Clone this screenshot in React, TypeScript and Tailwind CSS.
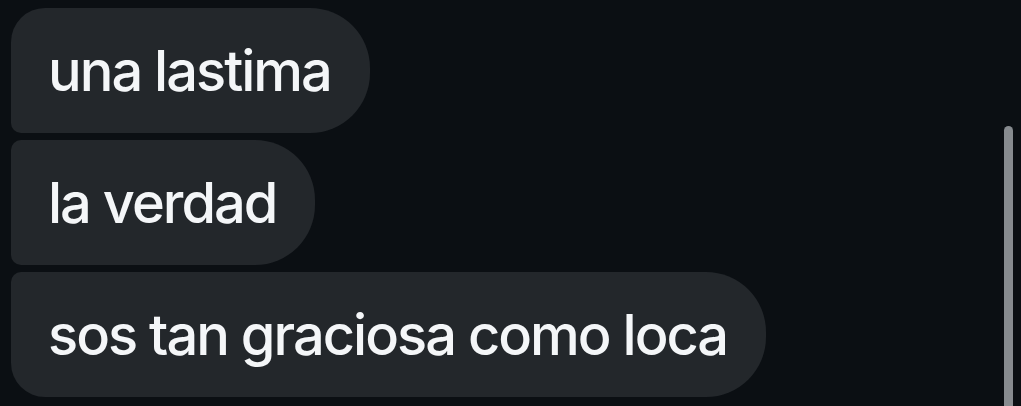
import React from "react";

type Bubble = { text: string; corners: string };

const messages: Bubble[] = [
  { text: "una lastima", corners: "rounded-tl-[34px] rounded-bl-[10px]" },
  { text: "la verdad", corners: "rounded-tl-[10px] rounded-bl-[10px]" },
  { text: "sos tan graciosa como loca", corners: "rounded-tl-[10px] rounded-bl-[34px]" },
];

export default function App() {
  return (
    <div className="relative h-[406px] w-[1021px] overflow-hidden bg-[#0b0f13]">
      <div className="flex flex-col items-start gap-[7px] pl-[11px] pt-[8px]">
        {messages.map((m) => (
          <div
            key={m.text}
            className={`flex h-[125px] items-center rounded-r-[60px] bg-[#23272b] pl-[37px] pr-[39px] ${m.corners}`}
          >
            <span
              className="whitespace-nowrap text-[56px] font-[550] leading-none tracking-[-2px] text-[#f4f6f8]"
              style={{ fontFamily: "Inter, 'Noto Sans', sans-serif" }}
            >
              {m.text}
            </span>
          </div>
        ))}
      </div>
      {/* overlay scroll indicator */}
      <div className="absolute left-[1004px] top-[126px] h-[290px] w-[9px] rounded-full bg-[#878b8f]" />
    </div>
  );
}
